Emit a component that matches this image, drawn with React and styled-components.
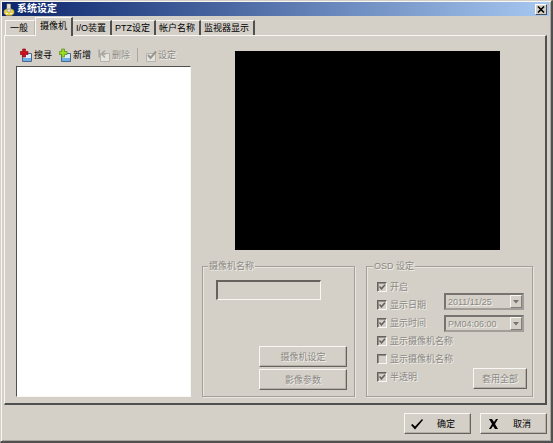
import React from "react";
import styled, { createGlobalStyle, css } from "styled-components";

const face = "#d4d0c8";
const shade = "#808080";
const dark = "#505050";
const light = "#f8f7f4";

const GlobalStyle = createGlobalStyle`
  *, *::before, *::after { box-sizing: border-box; }
  body { margin: 0; background: ${face}; }
  body, button, input, select {
    font-family: "Liberation Sans", "Noto Sans CJK SC", sans-serif;
    font-size: 9px;
    line-height: 12px;
    color: #000;
  }
`;

const faded = css`
  color: #8c8984;
  text-shadow: 1px 1px 0 #f1efeb;
`;

const Window = styled.main`
  display: flex;
  flex-direction: column;
  min-height: 100vh;
  padding: 1px;
  background: ${face};
  border: 1px solid ${face};
  border-right: 2px solid ${dark};
  border-bottom: 2px solid ${dark};
  box-shadow: inset 1px 1px 0 ${light}, inset -1px -1px 0 #aaa69f;
`;

const TitleBar = styled.header`
  display: flex;
  align-items: center;
  gap: 2px;
  height: 14px;
  margin-right: 1px;
  padding: 0 2px 0 1px;
  background: linear-gradient(90deg, #0b246b, #a6c8f0);
`;

const Title = styled.h1`
  flex: 1;
  margin: 0;
  font-size: 10px;
  line-height: 14px;
  font-weight: 700;
  color: #fff;
`;

const CloseButton = styled.button`
  display: grid;
  place-items: center;
  width: 12px;
  height: 11px;
  padding: 0;
  background: ${face};
  border: 1px solid;
  border-color: #fff ${dark} ${dark} #fff;
`;

const TabStrip = styled.div`
  display: flex;
  align-items: flex-end;
  height: 19px;
  padding: 0 3px;
`;

const Tab = styled.button`
  height: 15px;
  padding: 0 4px 0 3px;
  white-space: nowrap;
  background: ${face};
  border: 0 solid;
  border-color: ${light} ${dark} transparent ${light};
  border-width: 1px 2px 0 0;
  ${(p) => p.$first && css`
    padding: 0 6px 0 4px;
    border-width: 1px 1px 0 1px;
    border-right-color: #bcb8b0;
  `}
  ${(p) => p.$active && css`
    position: relative;
    height: 19px;
    margin-bottom: -1px;
    padding: 0 4px 2px;
    border-width: 1px 2px 0 1px;
  `}
`;

const Panel = styled.section`
  display: grid;
  grid-template-columns: 175fr 331fr;
  gap: 11px;
  flex: 1;
  margin: 0 3px 0 2px;
  padding: 11px 12px 6px 11px;
  border: 1px solid;
  border-color: ${light} ${dark} ${dark} ${light};
  border-right-width: 2px;
  border-bottom-width: 2px;
`;

const CameraColumn = styled.div`
  display: flex;
  flex-direction: column;
  gap: 3px;
`;

const Toolbar = styled.div`
  display: flex;
  align-items: center;
  height: 16px;
  padding-left: 4px;
  gap: 7px;
`;

const ToolButton = styled.button`
  display: flex;
  align-items: center;
  gap: 1px;
  padding: 0;
  white-space: nowrap;
  background: none;
  border: 0;
  &:disabled { ${faded} }
`;

const ToolDivider = styled.span`
  width: 1px;
  height: 14px;
  margin-right: -1px;
  background: #aaa69f;
`;

const CameraList = styled.div`
  flex: 1;
  background: #fff;
  border: 1px solid;
  border-color: ${dark} ${light} ${light} ${dark};
`;

const DetailColumn = styled.div`
  display: flex;
  flex-direction: column;
  justify-content: space-between;
  padding-top: 4px;
`;

const Preview = styled.div`
  width: 80%;
  aspect-ratio: 4 / 3;
  margin: 0 auto;
  background: #000;
`;

const Groups = styled.div`
  display: grid;
  grid-template-columns: 153fr 167fr;
  gap: 11px;
`;

const Group = styled.fieldset`
  display: flex;
  flex-direction: column;
  min-width: 0;
  height: 137px;
  margin: 0;
  padding: 6px 6px 7px 10px;
  border: 1px solid #a39f98;
  box-shadow: 1px 1px 0 #e9e6e0, inset 1px 1px 0 #e9e6e0;
  ${(p) => p.$name && css`padding: 8px 7px 6px 13px;`}
`;

const Legend = styled.legend`
  margin-left: ${(p) => (p.$name ? "-8px" : "-4px")};
  padding: 0 1px;
  background: ${face};
  ${faded}
`;

const NameInput = styled.input`
  width: 80%;
  height: 20px;
  padding: 0 4px;
  background: ${face};
  border: 2px solid;
  border-color: #66635e ${light} ${light} #66635e;
  border-right-width: 1px;
  border-bottom-width: 1px;
`;

const PushButton = styled.button`
  display: flex;
  align-items: center;
  justify-content: center;
  min-width: ${(p) => p.$width};
  height: 21px;
  padding: 0 8px;
  white-space: nowrap;
  background: ${face};
  border: 1px solid;
  border-color: ${light} #66635e #66635e ${light};
  box-shadow: inset -1px -1px 0 #b4b0a8;
  &:disabled { ${faded} }
`;

const ButtonStack = styled.div`
  display: flex;
  flex-direction: column;
  gap: 2px;
  width: 88px;
  margin: auto 0 0 auto;
`;

const Options = styled.div`
  display: grid;
  grid-template-columns: 1fr 80px;
  grid-template-rows: repeat(6, 18px);
  align-items: center;
  padding-right: 2px;
`;

const Option = styled.label`
  display: flex;
  align-items: center;
  gap: 3px;
  grid-column: ${(p) => (p.$wide ? "1 / -1" : "1")};
  white-space: nowrap;
  ${faded}
`;

const BoxWrap = styled.span`
  display: grid;
  width: 10px;
  height: 10px;
  & > * { grid-area: 1 / 1; }
`;

const BoxInput = styled.input`
  appearance: none;
  width: 10px;
  height: 10px;
  margin: 0;
  background: ${face};
  border: 1px solid;
  border-color: #66635e ${light} ${light} #66635e;
  box-shadow: inset 1px 1px 0 #918e88;
`;

const DropDowns = styled.div`
  display: flex;
  flex-direction: column;
  gap: 5px;
  grid-column: 2;
  grid-row: 2 / span 2;
  align-self: end;
`;

const SelectWrap = styled.span`
  display: grid;
  grid-template-columns: 1fr 12px;
  align-items: center;
  height: 17px;
  border: 2px solid;
  border-color: #77746f #a39f98 #a39f98 #77746f;
`;

const Select = styled.select`
  appearance: none;
  grid-area: 1 / 1 / 2 / 3;
  width: 100%;
  padding: 0 12px 0 2px;
  background: transparent;
  border: 0;
  &:disabled { ${faded} opacity: 1; }
`;

const DropMark = styled.span`
  display: grid;
  place-items: center;
  grid-area: 1 / 2;
  height: 13px;
  background: ${face};
  border: 1px solid;
  border-color: ${light} ${shade} ${shade} ${light};
  pointer-events: none;
`;

const ApplySlot = styled.div`
  display: flex;
  align-items: center;
  justify-content: flex-end;
  height: 18px;
  margin: 3px -3px 0 0;
`;

const Footer = styled.footer`
  display: flex;
  justify-content: flex-end;
  gap: 9px;
  padding: 8px 3px 6px;
`;

const ActionButton = styled(PushButton)`
  width: 67px;
  justify-content: flex-start;
  padding: 0 0 0 5px;
  gap: 13px;
`;

function Camera({ kind }) {
  const off = kind === "delete" || kind === "set";
  return (
    <svg width="13" height="14" viewBox="0 0 13 14" aria-hidden="true">
      <path
        d="M2.5 5.5h9v8h-9z"
        fill={off ? "#e6e4df" : "#dcebf8"}
        stroke={off ? "#b5b2ab" : "#47688c"}
      />
      {!off && <path d="M3 10h8v3H3z" fill="#6fb0e4" />}
      {kind === "search" && (
        <path d="M2.7 1h2.8v2.5H8v3H5.5V9H2.7V6.5H.3v-3h2.4z" fill="#d00f1c" stroke="#8c1019" strokeWidth=".7" />
      )}
      {kind === "add" && (
        <path d="M2.7 1h2.8v2.5H8v3H5.5V9H2.7V6.5H.3v-3h2.4z" fill="#9bdc22" stroke="#4d8613" strokeWidth=".7" />
      )}
      {kind === "delete" && <path d="M1.2 1.5v8M7 2.5 3.5 6 7 9.5M4 6h4" fill="none" stroke="#aaa7a0" strokeWidth="1.6" />}
      {kind === "set" && <path d="m4 7 2.5 3L12 3.5" fill="none" stroke="#98958f" strokeWidth="2" />}
    </svg>
  );
}

function AppIcon() {
  return (
    <svg width="12" height="13" viewBox="0 0 12 13" aria-hidden="true">
      <path d="M1 7.5 3.5 6h5L11 7.5v3l-2.5 2h-5l-2.5-2z" fill="#e6cf45" stroke="#a99342" strokeWidth=".6" />
      <path d="M4 1h3.5v5H4z" fill="#e9e3c4" stroke="#b9b08c" strokeWidth=".5" />
      <circle cx="6" cy="7.5" r="1.7" fill="#d9dee8" stroke="#9a9a80" strokeWidth=".6" />
      <path d="M2.5 10.5H5M7 10.5h2.5" stroke="#fff8c4" strokeWidth="1.2" />
    </svg>
  );
}

function CheckOption({ id, label, checked, wide }) {
  return (
    <Option htmlFor={id} $wide={wide}>
      <BoxWrap>
        <BoxInput id={id} type="checkbox" defaultChecked={checked} disabled />
        {checked && (
          <svg width="10" height="10" viewBox="0 0 10 10" aria-hidden="true">
            <path d="m2.5 4.5 2 2.2L8 2.7" fill="none" stroke="#66635e" strokeWidth="1.6" />
          </svg>
        )}
      </BoxWrap>
      {label}
    </Option>
  );
}

function DropDown({ label, value }) {
  return (
    <SelectWrap>
      <Select aria-label={label} disabled defaultValue={value}>
        <option>{value}</option>
      </Select>
      <DropMark>
        <svg width="6" height="4" viewBox="0 0 6 4" aria-hidden="true">
          <path d="M0 0h6L3 3.5z" fill="#77746f" />
        </svg>
      </DropMark>
    </SelectWrap>
  );
}

const tabs = ["一般", "摄像机", "I/O装置", "PTZ设定", "帐户名称", "监视器显示"];

export default function App() {
  return (
    <>
      <GlobalStyle />
      <Window lang="zh-CN">
        <TitleBar>
          <AppIcon />
          <Title>系统设定</Title>
          <CloseButton aria-label="关闭">
            <svg width="8" height="7" viewBox="0 0 8 7" aria-hidden="true">
              <path d="m1 .5 6 6M7 .5l-6 6" stroke="#000" strokeWidth="1.6" />
            </svg>
          </CloseButton>
        </TitleBar>
        <TabStrip role="tablist">
          {tabs.map((name, i) => (
            <Tab key={name} role="tab" aria-selected={i === 1} $first={i === 0} $active={i === 1}>
              {name}
            </Tab>
          ))}
        </TabStrip>
        <Panel role="tabpanel" aria-label="摄像机">
          <CameraColumn>
            <Toolbar>
              <ToolButton><Camera kind="search" />搜寻</ToolButton>
              <ToolButton><Camera kind="add" />新增</ToolButton>
              <ToolButton disabled><Camera kind="delete" />删除</ToolButton>
              <ToolDivider />
              <ToolButton disabled><Camera kind="set" />设定</ToolButton>
            </Toolbar>
            <CameraList />
          </CameraColumn>
          <DetailColumn>
            <Preview />
            <Groups>
              <Group $name>
                <Legend $name>摄像机名称</Legend>
                <NameInput aria-label="摄像机名称" disabled />
                <ButtonStack>
                  <PushButton disabled>摄像机设定</PushButton>
                  <PushButton disabled>影像参数</PushButton>
                </ButtonStack>
              </Group>
              <Group>
                <Legend>OSD 设定</Legend>
                <Options>
                  <CheckOption id="on" label="开启" checked wide />
                  <CheckOption id="date" label="显示日期" checked />
                  <DropDowns>
                    <DropDown label="日期" value="2011/11/25" />
                    <DropDown label="时间" value="PM04:06:00" />
                  </DropDowns>
                  <CheckOption id="time" label="显示时间" checked />
                  <CheckOption id="name" label="显示摄像机名称" checked wide />
                  <CheckOption id="name2" label="显示摄像机名称" wide />
                  <CheckOption id="alpha" label="半透明" checked />
                  <ApplySlot>
                    <PushButton $width="54px" disabled>套用全部</PushButton>
                  </ApplySlot>
                </Options>
              </Group>
            </Groups>
          </DetailColumn>
        </Panel>
        <Footer>
          <ActionButton>
            <svg width="14" height="12" viewBox="0 0 14 12" aria-hidden="true">
              <path d="M1 7 2.5 6 5 8.5 12 1 13 2 5 11.5z" fill="#000" />
            </svg>
            确定
          </ActionButton>
          <ActionButton>
            <svg width="14" height="12" viewBox="0 0 14 12" aria-hidden="true">
              <path d="M3 1h3l2 3 2-3h2L9 6l3 5H9L7 8l-2 3H3l3-5z" fill="#000" />
            </svg>
            取消
          </ActionButton>
        </Footer>
      </Window>
    </>
  );
}
